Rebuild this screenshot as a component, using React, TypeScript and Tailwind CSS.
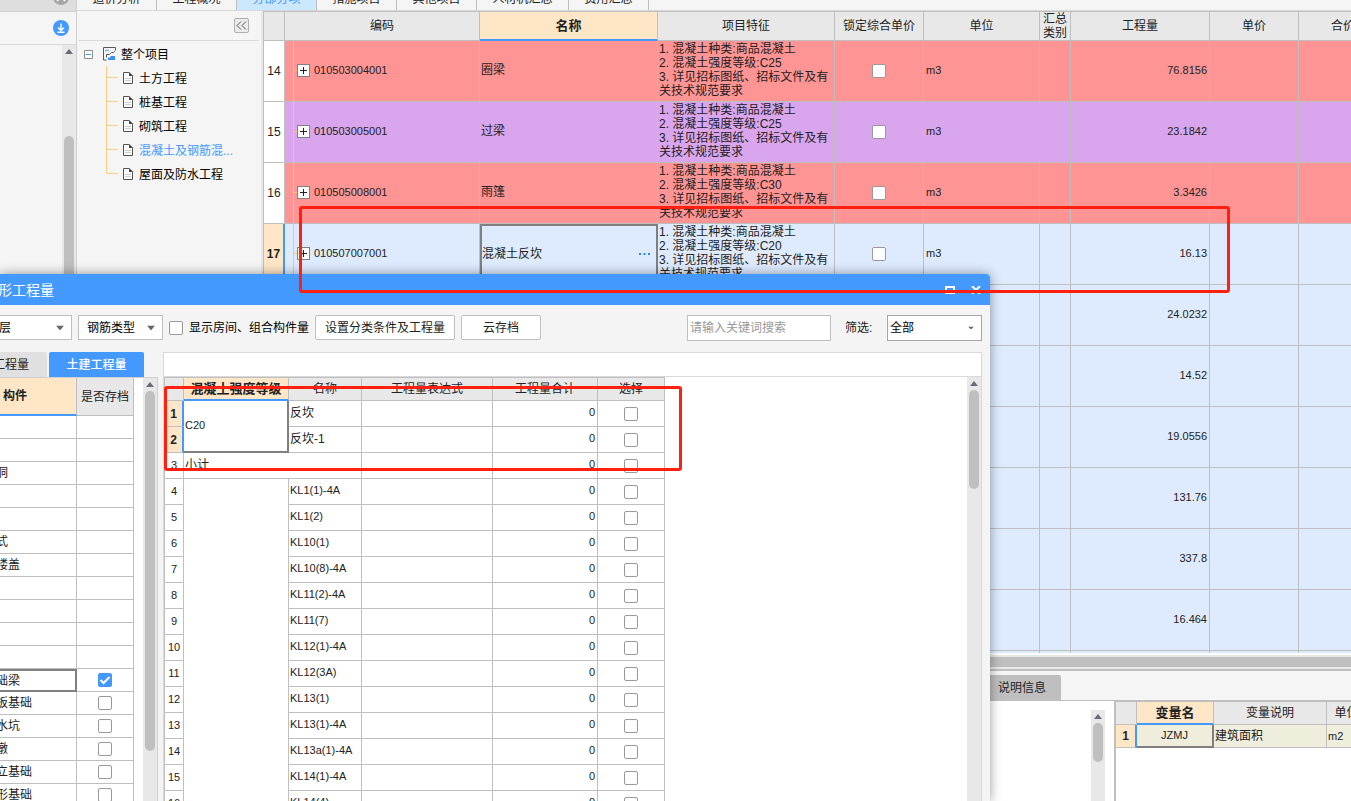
import { useState } from 'react';
import type { ReactNode } from 'react';

const TABS = ['造价分析', '工程概况', '分部分项', '措施项目', '其他项目', '人材机汇总', '费用汇总'];
const TREE = ['土方工程', '桩基工程', '砌筑工程', '混凝土及钢筋混...', '屋面及防水工程'];

interface BillRow {
  no?: number;
  code?: string;
  name?: string;
  grade?: string;
  qty: string;
  tone: string;
}

const RED = 'bg-[#ff9494]';
const PURPLE = 'bg-[#d9a5ec]';
const BLUE = 'bg-[#deebff]';

const BILL_ROWS: BillRow[] = [
  { no: 14, code: '010503004001', name: '圈梁', grade: 'C25', qty: '76.8156', tone: RED },
  { no: 15, code: '010503005001', name: '过梁', grade: 'C25', qty: '23.1842', tone: PURPLE },
  { no: 16, code: '010505008001', name: '雨篷', grade: 'C30', qty: '3.3426', tone: RED },
  { no: 17, code: '010507007001', name: '混凝土反坎', grade: 'C20', qty: '16.13', tone: BLUE },
  { qty: '24.0232', tone: BLUE },
  { qty: '14.52', tone: BLUE },
  { qty: '19.0556', tone: BLUE },
  { qty: '131.76', tone: BLUE },
  { qty: '337.8', tone: BLUE },
  { qty: '16.464', tone: BLUE },
  { qty: '', tone: BLUE },
];

const PARTS = [
  '', '', '洞', '', '', '式', '楼盖', '', '', '', '', '础梁', '板基础', '水坑', '墩', '立基础', '形基础',
];

const BEAMS = [
  'KL1(1)-4A', 'KL1(2)', 'KL10(1)', 'KL10(8)-4A', 'KL11(2)-4A', 'KL11(7)', 'KL12(1)-4A',
  'KL12(3A)', 'KL13(1)', 'KL13(1)-4A', 'KL13a(1)-4A', 'KL14(1)-4A', 'KL14(4)',
];

const HEAD = 'border-r border-b border-[#bfbfbf] bg-[#e8e8e8] p-0 font-normal';
const HEAD_ACTIVE = 'border-r border-b-2 border-r-[#bfbfbf] border-b-[#4499ff] bg-[#ffe6c7] p-0 font-bold';
const CELL = 'border-r border-b border-[#bfbfbf] p-0';

export default function App() {
  return (
    <div className="relative flex h-screen overflow-hidden bg-[#f5f5f5] font-['Liberation_Sans','Noto_Sans_CJK_SC',sans-serif] text-xs text-[#222]">
      <Rail />
      <main className="flex min-w-0 flex-1 flex-col">
        <TopTabs />
        <div className="flex min-h-0 flex-1">
          <ProjectTree />
          <section className="flex min-w-0 flex-1 flex-col">
            <BillTable />
            <BottomPanel />
          </section>
        </div>
      </main>
      <QuantityDialog />

      {/* Highlight marks */}
      <div className="pointer-events-none absolute top-[206px] left-[299px] h-[87px] w-[931px] rounded-[3px] border-3 border-[#ff2010]" />
      <div className="pointer-events-none absolute top-[386px] left-[164px] h-[85px] w-[518px] rounded-[3px] border-3 border-[#ff2010]" />
    </div>
  );
}

// ─── Left rail ───────────────────────────────────────────────────────────────

function Rail() {
  return (
    <aside className="flex w-[77px] shrink-0 flex-col border-r border-[#d0d0d0]">
      <div className="flex h-3 items-end justify-end overflow-hidden border-b border-[#d0d0d0] bg-[#dedede] pr-[7px]">
        <svg width="16" height="11" viewBox="0 0 16 11">
          <circle cx="8" cy="-3" r="8" fill="#a6a6a6" />
          <path d="M4 1l4-4 4 4" stroke="#fff" strokeWidth="1.5" fill="none" />
        </svg>
      </div>
      <div className="flex h-[33px] items-center justify-end border-b border-[#d9d9d9] pr-[7px]">
        <button aria-label="下载">
          <svg width="16" height="16" viewBox="0 0 16 16">
            <circle cx="8" cy="8" r="8" fill="#4499ff" />
            <path d="M8 3.5v7M5 7.6l3 3 3-3M4.5 12.2h7" stroke="#fff" strokeWidth="1.4" fill="none" />
          </svg>
        </button>
      </div>
      <div className="flex flex-1 justify-end">
        <ScrollBar thumb="mt-[82px] h-[300px]" />
      </div>
    </aside>
  );
}

function ScrollBar({ thumb }: { thumb: string }) {
  return (
    <div className="flex w-[14px] shrink-0 flex-col items-center bg-[#e8e8e8]">
      <svg className="mt-1 shrink-0" width="8" height="5" viewBox="0 0 8 5">
        <path d="M4 0l4 5H0z" fill="#6b6b76" />
      </svg>
      <div className={`w-[10px] rounded-full bg-[#bfbfbf] ${thumb}`} />
    </div>
  );
}

// ─── Tabs and project tree ───────────────────────────────────────────────────

function TopTabs() {
  return (
    <nav className="flex h-[11px] shrink-0 items-end overflow-hidden border-b border-[#d9d9d9]">
      {TABS.map((tab, i) => (
        <button
          key={tab}
          className={`h-[22px] shrink-0 border-r border-[#bfbfbf] leading-5 ${tab === '人材机汇总' ? 'w-[92px]' : 'w-20'} ${
            i === 2 ? 'bg-[#cce8ff] text-[#4499ff]' : ''
          }`}
        >
          {tab}
        </button>
      ))}
    </nav>
  );
}

function ProjectTree() {
  const [active, setActive] = useState(3);
  return (
    <div className="w-[186px] shrink-0 border-r-2 border-[#e8e8e8] pr-[2px] pl-[2px]">
      <div className="flex h-[30px] items-center justify-end border-b border-[#d9d9d9] pr-[10px]">
        <button
          aria-label="收起"
          className="grid size-[15px] place-items-center rounded-[2px] border border-[#b0b0b0] bg-[#ebebeb]"
        >
          <svg width="11" height="9" viewBox="0 0 11 9" fill="none" stroke="#555">
            <path d="M5 .5l-4 4 4 4M10 .5l-4 4 4 4" />
          </svg>
        </button>
      </div>
      <div className="mt-px flex h-6 items-center pl-[5px] text-black">
        <svg width="9" height="9" viewBox="0 0 9 9" fill="none">
          <path d="M.5.5h8v8h-8z" fill="#fff" stroke="#8c8c8c" />
          <path d="M2 4.5h5" stroke="#3ba0c8" />
        </svg>
        <svg className="ml-[10px]" width="14" height="14" viewBox="0 0 14 14" fill="none">
          <path d="M12.500 3V.5H.5v12.500h3M3.500 10.500V7.500h3l2-2h2l2-2" stroke="#595959" />
          <path d="M2 3.500h4" stroke="#7db8f5" strokeWidth="1.5" />
          <path d="M5 13v-2.500h2.500V9H12v4z" fill="#3c8ff0" />
        </svg>
        <span className="ml-1 pt-[2px]">整个项目</span>
      </div>
      <ul className="pl-[27px]">
        {TREE.map((item, i) => (
          <li key={item} className="flex h-6 items-center">
            <svg width="12" height="24" viewBox="0 0 12 24" fill="none" stroke="#ffcc80">
              <path d={i === TREE.length - 1 ? 'M.5 0V11.5H12' : 'M.5 0V24M0 11.5H12'} />
            </svg>
            <svg className="ml-[5px]" width="10" height="12" viewBox="0 0 10 12" fill="none">
              <path d="M.5.5h5.5l3.5 3.5v7.500h-9z" fill="#fff" stroke="#555" />
              <path d="M6 0l4 4H6z" fill="#444" />
              <path d="M2 6.500h6M2 8.500h6" stroke="#ccc" />
            </svg>
            <button
              onClick={() => setActive(i)}
              className={`ml-[6px] pt-[2px] whitespace-nowrap ${active === i ? 'text-[#4499ff]' : 'text-black'}`}
            >
              {item}
            </button>
          </li>
        ))}
      </ul>
    </div>
  );
}

// ─── Bill of quantities ──────────────────────────────────────────────────────

function BillTable() {
  return (
    <div className="min-h-0 flex-1 overflow-hidden border-t border-l border-[#bfbfbf] bg-white">
      <table className="w-[1124px] table-fixed border-separate border-spacing-0">
        <colgroup>
          <col className="w-[21px]" />
          <col className="w-[195px]" />
          <col className="w-[178px]" />
          <col className="w-[177px]" />
          <col className="w-[89px]" />
          <col className="w-[116px]" />
          <col className="w-[31px]" />
          <col className="w-[139px]" />
          <col className="w-[89px]" />
          <col className="w-[89px]" />
        </colgroup>
        <thead>
          <tr className="h-[29px]">
            <th className={HEAD} />
            <th className={HEAD}>编码</th>
            <th className={`${HEAD_ACTIVE} text-[13px]`}>名称</th>
            <th className={HEAD}>项目特征</th>
            <th className={HEAD}>锁定综合单价</th>
            <th className={HEAD}>单位</th>
            <th className={`${HEAD} leading-[14px]`}>汇总类别</th>
            <th className={HEAD}>工程量</th>
            <th className={HEAD}>单价</th>
            <th className={HEAD}>合价</th>
          </tr>
        </thead>
        <tbody>
          {BILL_ROWS.map((row, i) => (
            <BillLine key={i} row={row} />
          ))}
        </tbody>
      </table>
    </div>
  );
}

function BillLine({ row }: { row: BillRow }) {
  const selected = row.no === 17;
  const cell = `${CELL} ${row.tone}`;
  return (
    <tr className="h-[61px]">
      <td
        className={`border-b border-b-[#bfbfbf] p-0 text-center ${
          selected ? 'border-r-2 border-r-[#4499ff] bg-[#ffe6c7] font-bold' : 'border-r border-r-[#bfbfbf] bg-white'
        }`}
      >
        {row.no}
      </td>
      <td className={cell}>
        {row.code && (
          <div className="flex h-[60px] items-center pb-[2px] pl-2 text-[11px]">
            <svg className="self-start" width="4" height="60" viewBox="0 0 4 60" fill="none" stroke="#ffc46b">
              <path d="M.5 0v60M0 29.500h4" />
            </svg>
            <button
              aria-label="展开"
              className="grid size-[13px] place-items-center border border-[#808080] bg-white"
            >
              <svg width="7" height="7" viewBox="0 0 7 7" stroke="#222">
                <path d="M3.500 0v7M0 3.500h7" />
              </svg>
            </button>
            <span className="ml-1">{row.code}</span>
          </div>
        )}
      </td>
      <td className={selected ? `border-2 border-[#808080] p-0 ${BLUE}` : cell}>
        <div className={`flex items-center justify-between pr-[6px] pb-[2px] ${selected ? '' : 'pl-px'}`}>
          <span>{row.name}</span>
          {selected && (
            <button aria-label="更多">
              <svg width="11" height="2" viewBox="0 0 11 2" fill="#2f86d6">
                <path d="M0 0h2v2H0zM4.500 0h2v2h-2zM9 0h2v2H9z" />
              </svg>
            </button>
          )}
        </div>
      </td>
      <td className={cell}>
        {row.grade && (
          <div className="h-[60px] overflow-hidden pt-px pl-px leading-[14px] whitespace-pre-line">
            {`1. 混凝土种类:商品混凝土\n2. 混凝土强度等级:${row.grade}\n3. 详见招标图纸、招标文件及有\n关技术规范要求`}
          </div>
        )}
      </td>
      <td className={cell}>
        {row.code && (
          <div className="flex justify-center">
            <CheckBox label={`锁定综合单价 ${row.no}`} />
          </div>
        )}
      </td>
      <td className={`${cell} pb-[2px] pl-[2px] text-[11px]`}>{row.code && 'm3'}</td>
      <td className={cell} />
      <td className={`${cell} pr-[2px] pb-[2px] text-right text-[11px]`}>{row.qty}</td>
      <td className={cell} />
      <td className={cell} />
    </tr>
  );
}

function CheckBox({ label, checked = false, id }: { label: string; checked?: boolean; id?: string }) {
  return (
    <span className="relative block size-[14px]">
      <input
        id={id}
        type="checkbox"
        aria-label={label}
        defaultChecked={checked}
        className="peer block size-[14px] appearance-none rounded-[2px] border border-[#999] bg-white checked:border-[#4499ff] checked:bg-[#4499ff]"
      />
      <svg
        className="pointer-events-none absolute inset-0 hidden peer-checked:block"
        width="14"
        height="14"
        viewBox="0 0 14 14"
        fill="none"
        stroke="#fff"
        strokeWidth="2"
      >
        <path d="M2.500 7l3 3 6-6" />
      </svg>
    </span>
  );
}

// ─── Bottom panel ────────────────────────────────────────────────────────────

function BottomPanel() {
  return (
    <div className="flex h-[148px] shrink-0 flex-col">
      <div className="shrink-0 border-t-2 border-b-2 border-t-white border-b-[#bfbfbf] bg-[#e8e8e8] py-[2px]">
        <div className="h-[10px] bg-[#bfbfbf]" />
      </div>
      <div className="flex h-[30px] shrink-0 items-end border-b border-[#bfbfbf]">
        <button className="h-[25px] rounded-tr-[2px] bg-[#bfbfbf] pr-[15px] pl-[735px]">说明信息</button>
      </div>
      <div className="flex min-h-0 flex-1 bg-white">
        <div className="flex w-[853px] shrink-0 justify-end border-r-2 border-[#bfbfbf] pt-[9px] pr-[9px]">
          <ScrollBar thumb="mt-1 h-[39px]" />
        </div>
        <div className="flex-1 overflow-hidden border-t border-[#bfbfbf]">
          <table className="w-[251px] table-fixed border-separate border-spacing-0">
            <colgroup>
              <col className="w-[21px]" />
              <col className="w-[77px]" />
              <col className="w-[113px]" />
              <col className="w-10" />
            </colgroup>
            <thead>
              <tr className="h-[23px]">
                <th className={HEAD} />
                <th className={`${HEAD_ACTIVE} text-[13px] leading-4`}>变量名</th>
                <th className={HEAD}>变量说明</th>
                <th className={HEAD}>单位</th>
              </tr>
            </thead>
            <tbody>
              <tr className="h-[23px]">
                <td className="border-r-2 border-b border-r-[#4499ff] border-b-[#bfbfbf] bg-[#ffe6c7] p-0 text-center font-bold">
                  1
                </td>
                <td className="border-r-2 border-b-2 border-[#808080] bg-[#efeedd] p-0 text-center text-[11px]">
                  JZMJ
                </td>
                <td className={`${CELL} bg-[#efeedd] pl-px`}>建筑面积</td>
                <td className={`${CELL} bg-[#efeedd] pl-px text-[11px]`}>m2</td>
              </tr>
            </tbody>
          </table>
        </div>
      </div>
    </div>
  );
}

// ─── Quantity dialog ─────────────────────────────────────────────────────────

function QuantityDialog() {
  return (
    <div
      role="dialog"
      aria-label="形工程量"
      className="absolute top-[274px] bottom-0 left-0 flex w-[990px] flex-col overflow-hidden rounded-tr-[4px] bg-[#f4f4f4] shadow-[0_0_12px_rgba(0,0,0,0.4)]"
    >
      <header className="flex h-[31px] shrink-0 items-center bg-[#4499ff] pr-[9px] text-white">
        <h2 className="-ml-[2px] flex-1 text-sm">形工程量</h2>
        <button aria-label="最大化">
          <svg width="10" height="8" viewBox="0 0 10 8" fill="none" stroke="#fff" strokeWidth="2">
            <path d="M1 1h8v6H1z" />
          </svg>
        </button>
        <button aria-label="关闭" className="ml-4">
          <svg width="10" height="8" viewBox="0 0 10 8" fill="none" stroke="#fff" strokeWidth="2">
            <path d="M1 0l8 8M9 0L1 8" />
          </svg>
        </button>
      </header>
      <Toolbar />
      <div className="flex min-h-0 flex-1">
        <PartList />
        <QuantityTable />
      </div>
    </div>
  );
}

function Arrow({ small }: { small?: boolean }) {
  return (
    <svg
      className="pointer-events-none absolute top-1/2 right-2 -translate-y-1/2"
      width={small ? 6 : 8}
      height={small ? 3 : 5}
      viewBox="0 0 8 5"
      preserveAspectRatio="none"
    >
      <path d="M0 0h8L4 5z" fill="#666" />
    </svg>
  );
}

function Picker({ label, value, className }: { label: string; value: string; className: string }) {
  return (
    <div className="relative">
      <select
        aria-label={label}
        className={`block h-[25px] appearance-none border border-[#bfbfbf] bg-white text-black ${className}`}
      >
        <option>{value}</option>
      </select>
      <Arrow />
    </div>
  );
}

function Toolbar() {
  return (
    <div className="flex h-[47px] shrink-0 items-start gap-[6px] pt-[10px] pr-2">
      <div className="-ml-[2px]">
        <Picker label="楼层" value="层" className="w-[74px]" />
      </div>
      <Picker label="类型" value="钢筋类型" className="w-[85px] pl-2" />
      <div className="flex h-[25px] items-center gap-[6px]">
        <CheckBox label="显示房间、组合构件量" id="show-rooms" />
        <label htmlFor="show-rooms" className="w-[120px] whitespace-nowrap text-black">
          显示房间、组合构件量
        </label>
      </div>
      <button className="h-[25px] w-[140px] rounded-[2px] border border-[#bfbfbf] bg-white">
        设置分类条件及工程量
      </button>
      <button className="h-[25px] w-20 rounded-[2px] border border-[#bfbfbf] bg-white">云存档</button>
      <input
        aria-label="搜索"
        placeholder="请输入关键词搜索"
        className="ml-auto h-[26px] w-[144px] border border-[#bfbfbf] bg-white px-[2px] placeholder:text-[#999]"
      />
      <label htmlFor="filter" className="w-11 pl-2 leading-[26px]">
        筛选:
      </label>
      <div className="relative">
        <select
          id="filter"
          className="block h-[26px] w-[95px] appearance-none border border-[#a6a6a6] bg-white pl-[2px] text-black"
        >
          <option>全部</option>
        </select>
        <Arrow small />
      </div>
    </div>
  );
}

function PartList() {
  return (
    <div className="flex w-[163px] shrink-0 flex-col">
      <div className="flex h-[25px] shrink-0 gap-[2px]">
        <button className="flex w-[47px] items-center justify-end rounded-tr-[2px] bg-[#e0e0e0] pr-[18px] whitespace-nowrap">
          工程量
        </button>
        <button className="w-[95px] rounded-t-[2px] bg-[#4499ff] font-medium text-white">土建工程量</button>
      </div>
      <div className="flex min-h-0 w-[158px] flex-1 justify-between overflow-hidden border-t border-r border-[#d0d0d0] bg-white">
        <table className="w-[134px] table-fixed border-separate border-spacing-0 self-start">
          <colgroup>
            <col className="w-[77px]" />
            <col className="w-[57px]" />
          </colgroup>
          <thead>
            <tr className="h-[38px]">
              <th className={`${HEAD_ACTIVE} text-left`}>
                <span className="pl-[3px]">构件</span>
              </th>
              <th className={`${HEAD} whitespace-nowrap`}>是否存档</th>
            </tr>
          </thead>
          <tbody>
            {PARTS.map((part, i) => (
              <tr key={i} className="h-[23px]">
                <td className={part === '础梁' ? 'border-2 border-l-0 border-[#808080] p-0' : CELL}>
                  <PartName name={part} />
                </td>
                <td className={CELL}>
                  {i > 10 && (
                    <div className="flex justify-center">
                      <CheckBox label={`是否存档 ${part}`} checked={part === '础梁'} />
                    </div>
                  )}
                </td>
              </tr>
            ))}
          </tbody>
        </table>
        <ScrollBar thumb="mt-1 h-[360px]" />
      </div>
    </div>
  );
}

// Names run off the left edge of the window, so the first glyph is cut
function PartName({ name }: { name: string }) {
  return <span className="-ml-1 block leading-4 whitespace-nowrap">{name}</span>;
}

function QuantityTable() {
  return (
    <div className="mr-2 flex min-w-0 flex-1 flex-col border-x border-[#d9d9d9] bg-white">
      <div className="h-[25px] shrink-0 border-y border-[#d9d9d9]" />
      <div className="flex min-h-0 flex-1 justify-between overflow-hidden">
        <table className="w-[501px] table-fixed border-separate border-spacing-0 self-start border-t border-l border-[#bfbfbf]">
          <colgroup>
            <col className="w-[19px]" />
            <col className="w-[105px]" />
            <col className="w-[73px]" />
            <col className="w-[131px]" />
            <col className="w-[105px]" />
            <col className="w-[67px]" />
          </colgroup>
          <thead>
            <tr className="h-[23px]">
              <th className={HEAD} />
              <th className={`${HEAD_ACTIVE} text-[13px] leading-4`}>混凝土强度等级</th>
              <th className={HEAD}>名称</th>
              <th className={HEAD}>工程量表达式</th>
              <th className={HEAD}>工程量合计</th>
              <th className={HEAD}>选择</th>
            </tr>
          </thead>
          <tbody>
            <QuantityLine no={1} active>
              <td
                rowSpan={2}
                className="border-r-2 border-b-2 border-[#808080] p-0 pb-[2px] pl-px text-[11px]"
              >
                C20
              </td>
              <td className={`${CELL} pb-[2px] pl-px`}>反坎</td>
            </QuantityLine>
            <QuantityLine no={2} active>
              <td className={`${CELL} pb-[2px] pl-px`}>反坎-1</td>
            </QuantityLine>
            <QuantityLine no={3}>
              <td colSpan={2} className={`${CELL} pb-[2px] pl-px`}>
                小计
              </td>
            </QuantityLine>
            {BEAMS.map((beam, i) => (
              <QuantityLine key={beam} no={i + 4}>
                {i === 0 && <td rowSpan={BEAMS.length} className={CELL} />}
                <td className={`${CELL} pb-[2px] pl-px text-[11px] whitespace-nowrap`}>{beam}</td>
              </QuantityLine>
            ))}
          </tbody>
        </table>
        <ScrollBar thumb="mt-1 h-[99px]" />
      </div>
    </div>
  );
}

function QuantityLine({ no, active, children }: { no: number; active?: boolean; children: ReactNode }) {
  return (
    <tr className="h-[26px]">
      <td
        className={`border-b border-b-[#bfbfbf] p-0 text-center ${
          active ? 'border-r-2 border-r-[#4499ff] bg-[#ffe6c7] font-bold' : 'border-r border-r-[#bfbfbf] text-[11px]'
        }`}
      >
        {no}
      </td>
      {children}
      <td className={CELL} />
      <td className={`${CELL} pr-[2px] pb-[2px] text-right text-[11px]`}>0</td>
      <td className={CELL}>
        <div className="flex justify-center">
          <CheckBox label={`选择 ${no}`} />
        </div>
      </td>
    </tr>
  );
}
